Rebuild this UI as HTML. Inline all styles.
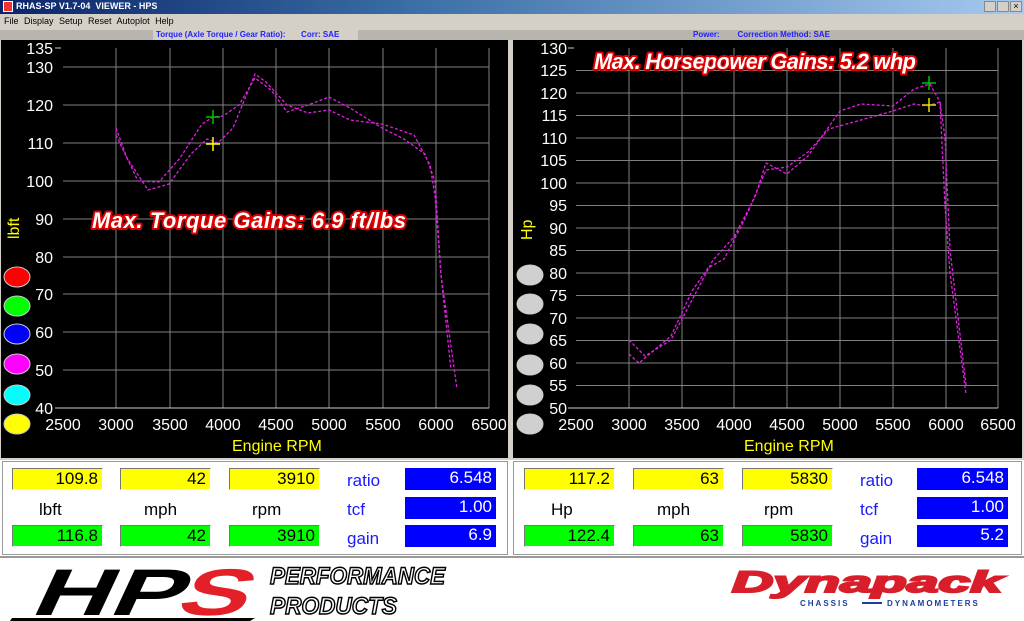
<!DOCTYPE html>
<html><head><meta charset="utf-8"><style>
*{margin:0;padding:0;box-sizing:border-box}
body{width:1024px;height:621px;overflow:hidden;background:#fff;font-family:"Liberation Sans",Arial,sans-serif;position:relative}
.a{position:absolute}
.box{position:absolute;height:22px;border:1px solid #777;border-right-color:#fff;border-bottom-color:#fff;font-size:17px;text-align:right;padding-right:4px;line-height:20px;color:#000}
.y{background:#ffff00}.g{background:#00ff00}.b{background:#0000ff;color:#fff;border:none}
.lbl{position:absolute;font-size:17px;color:#000}
.bl{position:absolute;font-size:17px;color:#1a1aff}
</style></head><body>
<div class="a" style="left:0;top:0;width:1024px;height:14px;background:linear-gradient(90deg,#0a246a,#3a6ea5 40%,#a6caf0)"></div>
<div class="a" style="left:3px;top:1px;width:10px;height:11px;background:#e33;border:1px solid #fff"></div>
<div class="a" style="left:16px;top:1px;font-size:9px;font-weight:bold;color:#fff">RHAS-SP V1.7-04&nbsp; VIEWER - HPS</div>
<div class="a" style="left:984px;top:1px;width:12px;height:11px;background:#d4d0c8;border:1px solid #888"></div>
<div class="a" style="left:997px;top:1px;width:12px;height:11px;background:#d4d0c8;border:1px solid #888"></div>
<div class="a" style="left:1010px;top:1px;width:12px;height:11px;background:#d4d0c8;border:1px solid #888;font-size:9px;line-height:9px;text-align:center">×</div>
<div class="a" style="left:0;top:14px;width:1024px;height:16px;background:#d4d0c8;font-size:9px;padding:2px 0 0 4px;word-spacing:3px">File Display Setup Reset Autoplot Help</div>
<div class="a" style="left:0;top:30px;width:1024px;height:10px;background:#b8b5ae"></div>
<div class="a" style="left:153px;top:30px;width:205px;height:10px;background:#d4d0c8;font-size:8px;font-weight:bold;color:#2020ff;line-height:10px;padding-left:3px">Torque (Axle Torque / Gear Ratio):&nbsp;&nbsp;&nbsp;&nbsp;&nbsp;&nbsp;&nbsp;Corr: SAE</div>
<div class="a" style="left:693px;top:30px;font-size:8px;font-weight:bold;color:#2020ff;line-height:10px">Power:&nbsp;&nbsp;&nbsp;&nbsp;&nbsp;&nbsp;&nbsp;&nbsp;Correction Method: SAE</div>
<div class="a" style="left:0;top:40px;width:1024px;height:420px;background:#d4d0c8"></div>
<svg class="a" style="left:0;top:0" width="1024" height="621" font-family="Liberation Sans, Arial, sans-serif">
<rect x="1" y="40" width="507" height="418" fill="#000"/>
<rect x="513" y="40" width="509" height="418" fill="#000"/>
<g stroke="#808080" stroke-width="1">
<line x1="63" y1="67" x2="489" y2="67"/><line x1="63" y1="105" x2="489" y2="105"/><line x1="63" y1="143" x2="489" y2="143"/><line x1="63" y1="181" x2="489" y2="181"/><line x1="63" y1="219" x2="489" y2="219"/><line x1="63" y1="257" x2="489" y2="257"/><line x1="63" y1="294" x2="489" y2="294"/><line x1="63" y1="332" x2="489" y2="332"/><line x1="63" y1="370" x2="489" y2="370"/>
<line x1="116" y1="48" x2="116" y2="408"/><line x1="170" y1="48" x2="170" y2="408"/><line x1="223" y1="48" x2="223" y2="408"/><line x1="276" y1="48" x2="276" y2="408"/><line x1="329" y1="48" x2="329" y2="408"/><line x1="383" y1="48" x2="383" y2="408"/><line x1="436" y1="48" x2="436" y2="408"/><line x1="489" y1="48" x2="489" y2="408"/>
<line x1="55" y1="408" x2="489" y2="408" stroke="#ccc"/>
<line x1="576" y1="70.5" x2="998" y2="70.5"/><line x1="576" y1="93" x2="998" y2="93"/><line x1="576" y1="115.5" x2="998" y2="115.5"/><line x1="576" y1="138" x2="998" y2="138"/><line x1="576" y1="160.5" x2="998" y2="160.5"/><line x1="576" y1="183" x2="998" y2="183"/><line x1="576" y1="205.5" x2="998" y2="205.5"/><line x1="576" y1="228" x2="998" y2="228"/><line x1="576" y1="250.5" x2="998" y2="250.5"/><line x1="576" y1="273" x2="998" y2="273"/><line x1="576" y1="295.5" x2="998" y2="295.5"/><line x1="576" y1="318" x2="998" y2="318"/><line x1="576" y1="340.5" x2="998" y2="340.5"/><line x1="576" y1="363" x2="998" y2="363"/><line x1="576" y1="385.5" x2="998" y2="385.5"/>
<line x1="629" y1="48" x2="629" y2="408"/><line x1="682" y1="48" x2="682" y2="408"/><line x1="734" y1="48" x2="734" y2="408"/><line x1="787" y1="48" x2="787" y2="408"/><line x1="840" y1="48" x2="840" y2="408"/><line x1="893" y1="48" x2="893" y2="408"/><line x1="946" y1="48" x2="946" y2="408"/><line x1="998" y1="48" x2="998" y2="408"/>
<line x1="568" y1="408" x2="998" y2="408" stroke="#ccc"/>
</g>
<g fill="#fff" font-size="16" text-anchor="end">
<text x="53" y="54">135</text><text x="53" y="73">130</text><text x="53" y="111">120</text><text x="53" y="149">110</text><text x="53" y="187">100</text><text x="53" y="225">90</text><text x="53" y="263">80</text><text x="53" y="300">70</text><text x="53" y="338">60</text><text x="53" y="376">50</text><text x="53" y="414">40</text>
<text x="567" y="54">130</text><text x="567" y="76">125</text><text x="567" y="99">120</text><text x="567" y="121">115</text><text x="567" y="144">110</text><text x="567" y="166">105</text><text x="567" y="189">100</text><text x="567" y="211">95</text><text x="567" y="234">90</text><text x="567" y="256">85</text><text x="567" y="279">80</text><text x="567" y="301">75</text><text x="567" y="324">70</text><text x="567" y="346">65</text><text x="567" y="369">60</text><text x="567" y="391">55</text><text x="567" y="414">50</text>
</g>
<g stroke="#ccc"><line x1="55" y1="48" x2="61" y2="48"/><line x1="568" y1="48" x2="574" y2="48"/></g>
<g fill="#fff" font-size="16" text-anchor="middle">
<text x="63" y="430">2500</text><text x="116" y="430">3000</text><text x="170" y="430">3500</text><text x="223" y="430">4000</text><text x="276" y="430">4500</text><text x="329" y="430">5000</text><text x="383" y="430">5500</text><text x="436" y="430">6000</text><text x="489" y="430">6500</text>
<text x="576" y="430">2500</text><text x="629" y="430">3000</text><text x="682" y="430">3500</text><text x="734" y="430">4000</text><text x="787" y="430">4500</text><text x="840" y="430">5000</text><text x="893" y="430">5500</text><text x="946" y="430">6000</text><text x="998" y="430">6500</text>
</g>
<g fill="#ffff00" font-size="16"><text x="232" y="451">Engine RPM</text><text x="744" y="451">Engine RPM</text>
<text transform="translate(19,239) rotate(-90)">lbft</text><text transform="translate(532,240) rotate(-90)">Hp</text></g>
<g stroke="#ccc" stroke-width="1">
<ellipse cx="17" cy="277" rx="13" ry="10" fill="#ff0000"/><ellipse cx="17" cy="306" rx="13" ry="10" fill="#00ff00"/><ellipse cx="17" cy="334" rx="13" ry="10" fill="#0000ff"/><ellipse cx="17" cy="364" rx="13" ry="10" fill="#ff00ff"/><ellipse cx="17" cy="395" rx="13" ry="10" fill="#00ffff"/><ellipse cx="17" cy="424" rx="13" ry="10" fill="#ffff00"/>
<g fill="#d0d0d0"><ellipse cx="530" cy="275" rx="13" ry="10"/><ellipse cx="530" cy="304" rx="13" ry="10"/><ellipse cx="530" cy="334" rx="13" ry="10"/><ellipse cx="530" cy="365" rx="13" ry="10"/><ellipse cx="530" cy="395" rx="13" ry="10"/><ellipse cx="530" cy="424" rx="13" ry="10"/></g>
</g>
<g fill="none" stroke="#e020e0" stroke-width="1.3" stroke-dasharray="3 2" stroke-linejoin="round">
<polyline points="116,128 127,158 148,190 169,184 191,154 207,139 218,143 233,128 255,74 266,82 287,105 308,113 329,110 350,120 382,124 414,135 430,165 435,196 441,275 457,389"/>
<polyline points="116,135 138,181 159,182 180,158 202,124 213,117 223,116 239,105 255,78 271,90 287,112 308,105 329,97 350,108 382,128 404,139 425,154 435,181 441,275 451,370"/>
<polyline points="629,340 645,356 671,340 692,300 713,260 734,237 755,197 766,163 787,174 808,156 840,111 861,104 893,106 914,89 930,84 940,102 945,206 950,273 966,394"/>
<polyline points="629,354 639,363 671,336 692,291 708,268 724,259 745,219 766,170 787,167 808,152 829,129 861,120 893,111 914,104 927,106 940,102 945,138 950,250 966,385"/>
</g>
<g stroke-width="1.5"><path d="M206 117h14M213 110v14" stroke="#00c000"/><path d="M206 144h14M213 137v14" stroke="#ffff00"/>
<path d="M922 83h14M929 76v14" stroke="#00c000"/><path d="M922 105h14M929 98v14" stroke="#e0e000"/></g>
<g font-size="22" font-weight="bold" font-style="italic" fill="#fff" stroke="#d00" stroke-width="4" paint-order="stroke" stroke-linejoin="round">
<text x="92" y="228" textLength="314">Max. Torque Gains: 6.9 ft/lbs</text>
<text x="594" y="69" textLength="322">Max. Horsepower Gains:  5.2 whp</text></g>
</svg>
<div class="a" style="left:2px;top:461px;width:506px;height:94px;border:1px solid #999"></div>
<div class="a" style="left:513px;top:461px;width:509px;height:94px;border:1px solid #999"></div>
<div class="box y" style="left:12px;top:468px;width:91px">109.8</div>
<div class="box y" style="left:120px;top:468px;width:91px">42</div>
<div class="box y" style="left:229px;top:468px;width:91px">3910</div>
<div class="lbl" style="left:39px;top:500px">lbft</div><div class="lbl" style="left:144px;top:500px">mph</div><div class="lbl" style="left:252px;top:500px">rpm</div>
<div class="box g" style="left:12px;top:525px;width:91px">116.8</div>
<div class="box g" style="left:120px;top:525px;width:91px">42</div>
<div class="box g" style="left:229px;top:525px;width:91px">3910</div>
<div class="bl" style="left:347px;top:471px">ratio</div><div class="bl" style="left:347px;top:500px">tcf</div><div class="bl" style="left:347px;top:529px">gain</div>
<div class="box b" style="left:405px;top:468px;width:91px">6.548</div>
<div class="box b" style="left:405px;top:497px;width:91px">1.00</div>
<div class="box b" style="left:405px;top:525px;width:91px">6.9</div>
<div class="box y" style="left:524px;top:468px;width:91px">117.2</div>
<div class="box y" style="left:633px;top:468px;width:91px">63</div>
<div class="box y" style="left:742px;top:468px;width:91px">5830</div>
<div class="lbl" style="left:551px;top:500px">Hp</div><div class="lbl" style="left:657px;top:500px">mph</div><div class="lbl" style="left:764px;top:500px">rpm</div>
<div class="box g" style="left:524px;top:525px;width:91px">122.4</div>
<div class="box g" style="left:633px;top:525px;width:91px">63</div>
<div class="box g" style="left:742px;top:525px;width:91px">5830</div>
<div class="bl" style="left:860px;top:471px">ratio</div><div class="bl" style="left:860px;top:500px">tcf</div><div class="bl" style="left:860px;top:529px">gain</div>
<div class="box b" style="left:917px;top:468px;width:91px">6.548</div>
<div class="box b" style="left:917px;top:497px;width:91px">1.00</div>
<div class="box b" style="left:917px;top:525px;width:91px">5.2</div>
<div class="a" style="left:0;top:556px;width:1024px;height:2px;background:#999"></div>
<svg class="a" style="left:0;top:558px" width="1024" height="63" font-family="Liberation Sans, Arial, sans-serif">
<g transform="skewX(-25)">
<text x="55" y="57" font-size="66" font-weight="bold" fill="#000" textLength="150" lengthAdjust="spacingAndGlyphs">HP</text>
<text x="200" y="57" font-size="66" font-weight="bold" fill="#e32027" textLength="70" lengthAdjust="spacingAndGlyphs">S</text>
</g>
<path d="M12 60 L255 60 L250 63 L10 63Z" fill="#000"/>
<g font-size="24" font-weight="bold" font-style="italic" fill="#fff" stroke="#000" stroke-width="1.5">
<text x="270" y="26" textLength="175" lengthAdjust="spacingAndGlyphs">PERFORMANCE</text>
<text x="270" y="56" textLength="127" lengthAdjust="spacingAndGlyphs">PRODUCTS</text></g>
<text x="732" y="34" font-size="30" font-weight="bold" font-style="italic" fill="#d81e2a" stroke="#d81e2a" stroke-width="2" textLength="270" lengthAdjust="spacingAndGlyphs">Dynapack</text>
<text x="800" y="48" font-size="8" font-weight="bold" fill="#1a3fa0" letter-spacing="2">CHASSIS</text>
<text x="887" y="48" font-size="8" font-weight="bold" fill="#1a3fa0" letter-spacing="2">DYNAMOMETERS</text>
<line x1="862" y1="45" x2="882" y2="45" stroke="#1a3fa0" stroke-width="2"/>
</svg>
</body></html>
